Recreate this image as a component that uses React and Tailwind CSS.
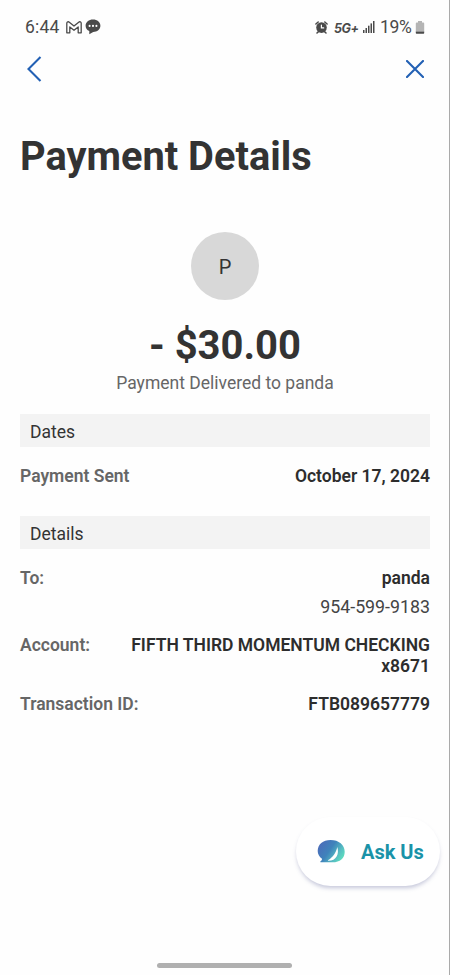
import React from 'react';

// Status bar icons
function MailIcon() {
  return (
    <svg width="16" height="13" viewBox="0 0 16 13" fill="none" stroke="#4a4a4a" strokeWidth="1.300" strokeLinejoin="round">
      <path d="M.8 11.800V2.200C.8.800 2.300.4 3.300 1.200L8 5l4.700-3.800c1-.8 2.500-.4 2.500 1v9.600h-3V6L8 9.300 3.800 6v5.800z" />
    </svg>
  );
}

function ChatIcon() {
  return (
    <svg width="16" height="16" viewBox="0 0 16 16">
      <path d="M8 .6c4.200 0 7.400 2.600 7.400 6.100S12.200 12.900 8.200 12.900L4.300 15.200V12.100C2 11.100.6 9.100.6 6.700.6 3.200 3.800.6 8 .6z" fill="#4a4a4a" />
      <circle cx="4.600" cy="6.900" r="1.050" fill="#fff" />
      <circle cx="8" cy="6.900" r="1.050" fill="#fff" />
      <circle cx="11.400" cy="6.900" r="1.050" fill="#fff" />
    </svg>
  );
}

function AlarmIcon() {
  return (
    <svg width="13" height="13" viewBox="0 0 13 13" fill="none" stroke="#4a4a4a" strokeLinecap="round">
      <circle cx="6.500" cy="6.600" r="5.300" fill="#4a4a4a" stroke="none" />
      <path d="M.9 3L3.200 1M12.100 3L9.800 1M2 12l1.500-1.400M11 12l-1.500-1.400" strokeWidth="1.500" />
      <path d="M6.400 4v2.900h2.300" stroke="#fff" strokeWidth="1.200" />
    </svg>
  );
}

function SignalIcon() {
  return (
    <svg width="12" height="12" viewBox="0 0 12 12" fill="#4a4a4a">
      <rect x="0" y="9" width="1.500" height="3" />
      <rect x="2.500" y="7" width="1.500" height="5" />
      <rect x="5" y="4.700" width="1.500" height="7.300" />
      <rect x="7.500" y="2.400" width="1.500" height="9.600" />
      <rect x="10" y="0" width="1.500" height="12" />
    </svg>
  );
}

function BatteryIcon() {
  return (
    <svg width="10" height="13" viewBox="0 0 10 13">
      <path d="M3 0h4v1.500h1.300c.5 0 .9.4.9.9v8.100H.8V2.400c0-.5.4-.9.9-.9H3z" fill="#b5b5b5" />
      <path d="M.8 10.600h8.400v1.200c0 .6-.4 1-1 1H1.800c-.6 0-1-.4-1-1z" fill="#4a4a4a" />
    </svg>
  );
}

// Gradient speech bubble with a sail cut into it
function AskLogo() {
  return (
    <svg width="28" height="24" viewBox="0 0 28 24">
      <defs>
        <linearGradient id="askBubble" x1="4" y1="4" x2="26" y2="19" gradientUnits="userSpaceOnUse">
          <stop offset="0" stopColor="#4a6fba" />
          <stop offset=".4" stopColor="#3f83bb" />
          <stop offset=".75" stopColor="#57bfc2" />
          <stop offset="1" stopColor="#5ee0bd" />
        </linearGradient>
      </defs>
      <path d="M13.500 0C21.800 0 27.700 4.800 27.700 11.700c0 6.600-4.700 10.600-12.200 10.600H4c-.8 0-.9-.6-.4-1 .9-.7 1.500-1.500 1.400-2.600C2.300 16.800.7 14.200.7 11 .7 4.400 6 0 13.500 0z" fill="url(#askBubble)" />
      <path d="M20.300 7c2.200 7-1 13.800-8.800 13.800-.6 0-.7-.4-.2-.7C16 17 18.800 13 20.300 7z" fill="#fff" />
    </svg>
  );
}

function StatusBar() {
  return (
    <div className="flex h-[54px] items-center justify-between pl-[25px] pr-[24px] text-[#4a4a4a]">
      <div className="flex items-center">
        <span className="w-[41px] text-[17.5px] tracking-[0.2px]">6:44</span>
        <MailIcon />
        <span className="ml-[3px]"><ChatIcon /></span>
      </div>
      <div className="flex items-center">
        <AlarmIcon />
        <span className="ml-[6px] mt-[4px] w-[29px] font-[Inter,sans-serif] text-[12.5px] font-bold italic leading-none tracking-[-0.4px]">5G+</span>
        <SignalIcon />
        <span className="ml-[5px] w-[35px] text-[17.5px] tracking-[-0.3px]">19%</span>
        <BatteryIcon />
      </div>
    </div>
  );
}

function SectionHeader({ title }) {
  return (
    <h2 className="flex h-[33px] items-center bg-[#f3f3f3] px-[10px] pt-[3px] text-[17.5px] leading-[26px] text-[#333]">
      {title}
    </h2>
  );
}

function DetailRow({ label, children }) {
  return (
    <div className="flex justify-between text-[17.5px] font-semibold leading-[20.5px]">
      <span className="text-[#666]">{label}</span>
      <div className="text-right text-[#2d2d2d]">{children}</div>
    </div>
  );
}

function App() {
  return (
    <div className="relative h-[975px] w-full overflow-hidden border-r border-[#aaa] bg-[#fefefe] font-[Roboto,sans-serif]">
      <StatusBar />

      <nav className="flex h-[30px] items-center justify-between pl-[27px] pr-[25px]">
        <button aria-label="Back">
          <svg width="15" height="26" viewBox="0 0 15 26" fill="none" stroke="#2260b4" strokeWidth="2.100">
            <path d="M13.500 1L1.500 13l12 12" />
          </svg>
        </button>
        <button aria-label="Close">
          <svg width="18" height="18" viewBox="0 0 18 18" fill="none" stroke="#2260b4" strokeWidth="2.100" strokeLinecap="round">
            <path d="M1 1l16 16M17 1L1 17" />
          </svg>
        </button>
      </nav>

      <main className="pl-[20px] pr-[19px]">
        <h1 className="mt-[49px] text-[39.8px] font-bold leading-[48px] text-[#333]">Payment Details</h1>

        <div className="mt-[51px] flex flex-col items-center">
          <div className="flex h-[68px] w-[68px] items-center justify-center rounded-full bg-[#d8d8d8] pt-px text-[20px] text-[#333]">P</div>
          <p className="mt-[22px] text-[40px] font-bold leading-[48px] text-[#333]">- $30.00</p>
          <p className="mt-[3px] text-[17.5px] leading-[20px] text-[#666]">Payment Delivered to panda</p>
        </div>

        <section className="mt-[21px]">
          <SectionHeader title="Dates" />
          <div className="mt-[19px]">
            <DetailRow label="Payment Sent">October 17, 2024</DetailRow>
          </div>
        </section>

        <section className="mt-[29.5px]">
          <SectionHeader title="Details" />
          <div className="mt-[19px] flex flex-col gap-[18px]">
            <DetailRow label="To:">
              <p>panda</p>
              <p className="mt-[8px] text-[17.800px] font-normal text-[#444]">954-599-9183</p>
            </DetailRow>
            <DetailRow label="Account:">
              <p>FIFTH THIRD MOMENTUM CHECKING</p>
              <p>x8671</p>
            </DetailRow>
            <DetailRow label="Transaction ID:">FTB089657779</DetailRow>
          </div>
        </section>
      </main>

      {/* Floating chat button */}
      <button className="absolute right-[9px] top-[817px] flex h-[69px] w-[144px] items-center rounded-full bg-white pl-[21px] shadow-[0_3px_4px_-1px_rgba(90,95,150,0.35)]">
        <AskLogo />
        <span className="ml-[16px] text-[20px] font-bold text-[#1a93a8]">Ask Us</span>
      </button>

      {/* Gesture bar */}
      <div className="absolute left-[157px] top-[963px] h-[5px] w-[135px] rounded-full bg-[#b0b0b0]" />
    </div>
  );
}

export default App;
